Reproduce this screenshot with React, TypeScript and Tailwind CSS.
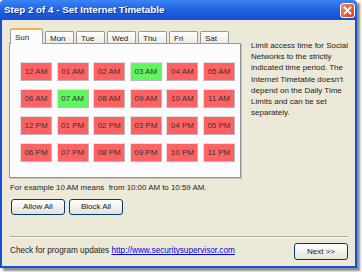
import React from 'react'

const days = ['Sun', 'Mon', 'Tue', 'Wed', 'Thu', 'Fri', 'Sat']

const hours = [
  '12 AM', '01 AM', '02 AM', '03 AM', '04 AM', '05 AM',
  '06 AM', '07 AM', '08 AM', '09 AM', '10 AM', '11 AM',
  '12 PM', '01 PM', '02 PM', '03 PM', '04 PM', '05 PM',
  '06 PM', '07 PM', '08 PM', '09 PM', '10 PM', '11 PM',
]

const allowed = ['03 AM', '07 AM']

const descLines = [
  'Limit access time for Social',
  'Networks to the strictly',
  'indicated time period. The',
  "Internet Timetable doesn't",
  'depend on the Daily Time',
  'Limits and can be set',
  'separately.',
]

const XpButton: React.FC<{ label: string; className?: string }> = ({ label, className }) => (
  <button
    className={`h-[16px] rounded-[3px] border border-[#003C74] bg-gradient-to-b from-white to-[#E3E3DB] text-[8px] text-[#222] leading-none ${className ?? ''}`}
  >
    {label}
  </button>
)

const App: React.FC = () => {
  return (
    <div
      className="w-[362px] h-[272px] bg-white"
      style={{ fontFamily: '"Liberation Sans", Arial, sans-serif' }}
    >
      <div className="w-[357px] h-[268px] flex flex-col shadow-[3px_3px_2px_rgba(0,0,0,0.45)]">
        {/* title bar */}
        <div className="h-[20px] flex items-center justify-between pl-[4px] pr-[2px] bg-gradient-to-b from-[#3B84F5] via-[#1F62E0] to-[#1650D0] rounded-t-[4px]">
          <span className="text-white font-bold text-[9.8px]" style={{ textShadow: '1px 1px 0 #0A2F9A' }}>
            Step 2 of 4 - Set Internet Timetable
          </span>
          <div className="w-[15px] h-[15px] rounded-[3px] border border-white bg-gradient-to-br from-[#F08A6A] to-[#D3401D] flex items-center justify-center">
            <svg width="9" height="9" viewBox="0 0 9 9">
              <path d="M1.5 1.5 L7.5 7.5 M7.5 1.5 L1.5 7.5" stroke="white" strokeWidth="1.8" strokeLinecap="square" />
            </svg>
          </div>
        </div>

        {/* body */}
        <div className="flex-1 flex flex-col bg-[#ECE9D8] border-x-[2px] border-b-[2px] border-[#1650D0] pl-[7px] pr-[7px] text-[#222]">
          <div className="flex mt-[9px]">
            {/* tabs + panel */}
            <div className="w-[235px] flex flex-col">
              <div className="flex items-end h-[14px] pl-[1px]">
                {days.map((d, i) =>
                  i === 0 ? (
                    <div
                      key={d}
                      className="relative z-10 w-[33px] h-[16px] -mb-[1px] bg-[#FCFCFE] border-x border-[#919B9C] border-t-[2px] border-t-[#F7B23E] rounded-t-[2px] text-[8px] pl-[4px] pt-[2px]"
                    >
                      {d}
                    </div>
                  ) : (
                    <div
                      key={d}
                      className="w-[29px] h-[12px] ml-[2px] first:ml-0 bg-gradient-to-b from-white to-[#ECEBE6] border border-b-0 border-[#919B9C] rounded-t-[2px] text-[8px] pl-[4px] pt-[1px]"
                    >
                      {d}
                    </div>
                  ),
                )}
              </div>
              <div className="h-[135px] bg-[#FCFCFE] border border-[#919B9C] border-r-[#8A9294] border-b-[#8A9294] shadow-[1px_1px_0_#C9C7BA] pl-[10px] pt-[18px]">
                <div className="grid grid-cols-[repeat(6,32px)] gap-x-[4.6px] gap-y-[8px]">
                  {hours.map((h) => (
                    <div
                      key={h}
                      className={`h-[19px] flex items-center justify-center text-[8px] text-[#333] border border-t-[#E0E0E0] border-l-[#E0E0E0] border-r-[#B8B8B8] border-b-[#B8B8B8] ${
                        allowed.includes(h) ? 'bg-[#5FF55F]' : 'bg-[#FF6262]'
                      }`}
                    >
                      {h}
                    </div>
                  ))}
                </div>
              </div>
            </div>

            {/* description */}
            <div className="ml-[10px] mt-[11px] text-[8px] leading-[11.2px] text-[#222] whitespace-nowrap">
              {descLines.map((l) => (
                <div key={l}>{l}</div>
              ))}
            </div>
          </div>

          <div className="mt-[5px] pl-[1px] text-[7.9px] leading-[10px]">
            For example 10 AM means&nbsp; from 10:00 AM to 10:59 AM.
          </div>

          <div className="flex gap-[4px] mt-[6px] pl-[2px]">
            <XpButton label="Allow All" className="w-[54px]" />
            <XpButton label="Block All" className="w-[54px]" />
          </div>

          <div className="mt-[21px] mx-[1px] mr-[0px] h-[2px] border-t border-[#ACA899] border-b border-b-white" />

          <div className="flex items-center justify-between mt-[5px] pl-[1px]">
            <span className="text-[8.2px]">
              Check for program updates{' '}
              <a className="text-[#0000EE] underline" href="#">
                http://www.securitysupervisor.com
              </a>
            </span>
            <XpButton label="Next >>" className="w-[54px] h-[17px]" />
          </div>
        </div>
      </div>
    </div>
  )
}

export default App
